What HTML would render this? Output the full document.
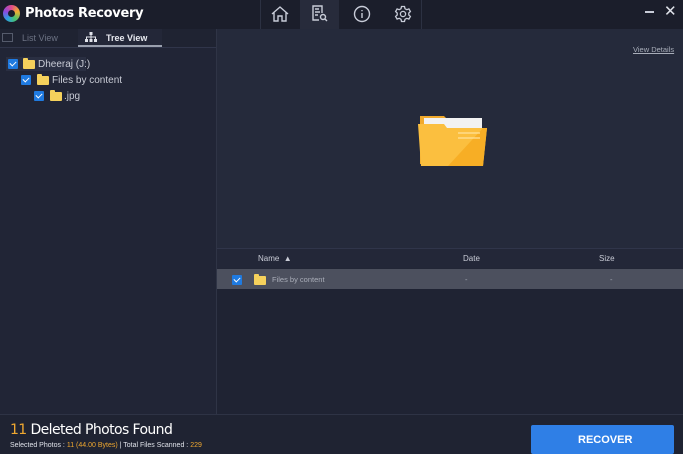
<!DOCTYPE html><html><head><style>
*{margin:0;padding:0;box-sizing:border-box}
body{width:683px;height:454px;background:#222636;font-family:"Liberation Sans",sans-serif;position:relative;overflow:hidden;color:#c9ccd6}
.a{position:absolute}
.cb{position:absolute;width:10px;height:10px;background:#1f7ae0;border-radius:1px}
.cb:after{content:"";position:absolute;left:3px;top:1px;width:3px;height:5px;border:solid #fff;border-width:0 1.5px 1.5px 0;transform:rotate(45deg)}
.fd{position:absolute;width:12px;height:9px;background:#f5d15c;border-radius:1px}
.fd:before{content:"";position:absolute;left:0;top:-2px;width:5px;height:3px;background:#f5d15c;border-radius:1px 1px 0 0}
</style></head><body>
<div class="a" style="left:0;top:0;width:683px;height:29px;background:#1b1e2b"></div>
<div class="a" style="left:3px;top:5px;width:17px;height:17px;border-radius:50%;background:conic-gradient(#e24a8a,#f0b030,#4cc46a,#2aa0e0,#8a4ae0,#e24a8a)"></div>
<div class="a" style="left:8px;top:10px;width:7px;height:7px;border-radius:50%;background:#1b1e2b"></div>
<div class="a" style="left:25px;top:6px;font-size:13px;color:#fff;font-weight:bold;font-family:'DejaVu Sans',sans-serif;letter-spacing:-0.3px">Photos Recovery</div>
<div class="a" style="left:260px;top:0;width:1px;height:29px;background:#2c3142"></div>
<div class="a" style="left:300px;top:0;width:39px;height:29px;background:#272b3b"></div>
<div class="a" style="left:421px;top:0;width:1px;height:29px;background:#2c3142"></div>
<svg class="a" style="left:270px;top:5px" width="20" height="18" viewBox="0 0 20 18" fill="none" stroke="#c8ccd8" stroke-width="1.4"><path d="M2 9L10 2l8 7M4 7.5V16h4v-5h4v5h4V7.5"/></svg>
<svg class="a" style="left:311px;top:4px" width="18" height="19" viewBox="0 0 18 19" fill="none" stroke="#c8ccd8" stroke-width="1.4"><path d="M11 9V2H2v14h6M4 5h4M4 8h5M4 11h3"/><circle cx="12" cy="13" r="2.5"/><path d="M14 15l2 2"/></svg>
<svg class="a" style="left:353px;top:5px" width="18" height="18" viewBox="0 0 18 18" fill="none" stroke="#c8ccd8" stroke-width="1.4"><circle cx="9" cy="9" r="7.5"/><path d="M9 8v5M9 5v1.2"/></svg>
<svg class="a" style="left:394px;top:5px" width="18" height="18" viewBox="0 0 18 18" fill="none" stroke="#c8ccd8" stroke-width="1.3"><circle cx="9" cy="9" r="2.6"/><path d="M7.5 1.5h3l.5 2.2 1.8 1 2.1-.8 1.5 2.6-1.6 1.5v2l1.6 1.5-1.5 2.6-2.1-.8-1.8 1-.5 2.2h-3L7 14.3l-1.8-1-2.1.8-1.5-2.6 1.6-1.5v-2L1.6 6.5l1.5-2.6 2.1.8 1.8-1z"/></svg>
<div class="a" style="left:645px;top:11px;width:9px;height:1.5px;background:#c8ccd8"></div>
<div class="a" style="left:664px;top:2px;font-size:15px;color:#e0e3ea">✕</div>
<div class="a" style="left:0;top:29px;width:216px;height:385px;background:#212536"></div>
<div class="a" style="left:216px;top:29px;width:1px;height:385px;background:#2f3446"></div>
<div class="a" style="left:0;top:29px;width:216px;height:18px;background:#1f2332"></div>
<div class="a" style="left:2px;top:33px;width:11px;height:9px;border:1px solid #555b6c"></div>
<div class="a" style="left:22px;top:33px;font-size:9px;color:#6c7283">List View</div>
<div class="a" style="left:78px;top:29px;width:84px;height:18px;background:#232738;border-bottom:2px solid #9aa0ae"></div>
<svg class="a" style="left:85px;top:32px" width="12" height="10" viewBox="0 0 12 10" fill="#e0e3ea"><rect x="4.5" y="0" width="3" height="3"/><rect x="0" y="7" width="3" height="3"/><rect x="4.5" y="7" width="3" height="3"/><rect x="9" y="7" width="3" height="3"/><path d="M6 3v4M1.5 7V5h9v2" stroke="#e0e3ea" fill="none"/></svg>
<div class="a" style="left:106px;top:33px;font-size:9px;color:#e8eaf0;font-weight:bold">Tree View</div>
<div class="a" style="left:0;top:47px;width:216px;height:1px;background:#30354a"></div>
<div class="a" style="left:6px;top:57px;width:80px;height:14px;background:#2a2f42"></div>
<div class="cb" style="left:8px;top:59px"></div><div class="fd" style="left:23px;top:60px"></div>
<div class="a" style="left:38px;top:59px;font-size:10px;color:#c9ccd6">Dheeraj (J:)</div>
<div class="cb" style="left:21px;top:75px"></div><div class="fd" style="left:37px;top:76px"></div>
<div class="a" style="left:52px;top:75px;font-size:10px;color:#c9ccd6">Files by content</div>
<div class="cb" style="left:34px;top:91px"></div><div class="fd" style="left:50px;top:92px"></div>
<div class="a" style="left:64px;top:91px;font-size:10px;color:#c9ccd6">.jpg</div>
<div class="a" style="left:217px;top:29px;width:466px;height:219px;background:#252a3b"></div>
<div class="a" style="left:633px;top:45px;font-size:7.5px;color:#a8adb9;text-decoration:underline">View Details</div>
<svg class="a" style="left:418px;top:110px" width="69" height="56" viewBox="0 0 69 56"><path d="M2 6h24l4 4h34v44H2z" fill="#f1a92c"/><rect x="6" y="8" width="58" height="20" fill="#f2f2f2"/><path d="M0 14h26l3 4h40l-4 38H3z" fill="#fbbf3f"/><path d="M30 56l35-38h4l-4 38z" fill="#f7ae25"/><path d="M40 23h22M40 28h22" stroke="#ffe29a" stroke-width="1.3"/></svg>
<div class="a" style="left:217px;top:248px;width:466px;height:20px;background:#232738;border-top:1px solid #30354a"></div>
<div class="a" style="left:258px;top:254px;font-size:8px;color:#c9ccd6">Name &nbsp;▲</div>
<div class="a" style="left:463px;top:254px;font-size:8px;color:#c9ccd6">Date</div>
<div class="a" style="left:599px;top:254px;font-size:8px;color:#c9ccd6">Size</div>
<div class="a" style="left:217px;top:269px;width:466px;height:20px;background:#4c505e"></div>
<div class="cb" style="left:232px;top:275px"></div>
<div class="fd" style="left:254px;top:276px"></div>
<div class="a" style="left:272px;top:275px;font-size:7.5px;color:#a9adb8">Files by content</div>
<div class="a" style="left:465px;top:275px;font-size:7.5px;color:#a9adb8">-</div>
<div class="a" style="left:610px;top:275px;font-size:7.5px;color:#a9adb8">-</div>
<div class="a" style="left:217px;top:289px;width:466px;height:125px;background:#1f2333"></div>
<div class="a" style="left:0;top:414px;width:683px;height:40px;background:#1f2332;border-top:1px solid #2e3345"></div>
<div class="a" style="left:10px;top:422px;font-size:14px;color:#fff;font-family:'DejaVu Sans',sans-serif;letter-spacing:-0.6px"><span style="color:#f0a830">11</span> Deleted Photos Found</div>
<div class="a" style="left:10px;top:442px;font-size:7px;color:#e0e3ea">Selected Photos : <span style="color:#f0a830">11 (44.00 Bytes)</span> | Total Files Scanned : <span style="color:#f0a830">229</span></div>
<div class="a" style="left:531px;top:425px;width:143px;height:29px;background:#2f7fe6;border-radius:2px"></div>
<div class="a" style="left:578px;top:434px;font-size:11px;color:#fff;font-weight:bold">RECOVER</div>
</body></html>
